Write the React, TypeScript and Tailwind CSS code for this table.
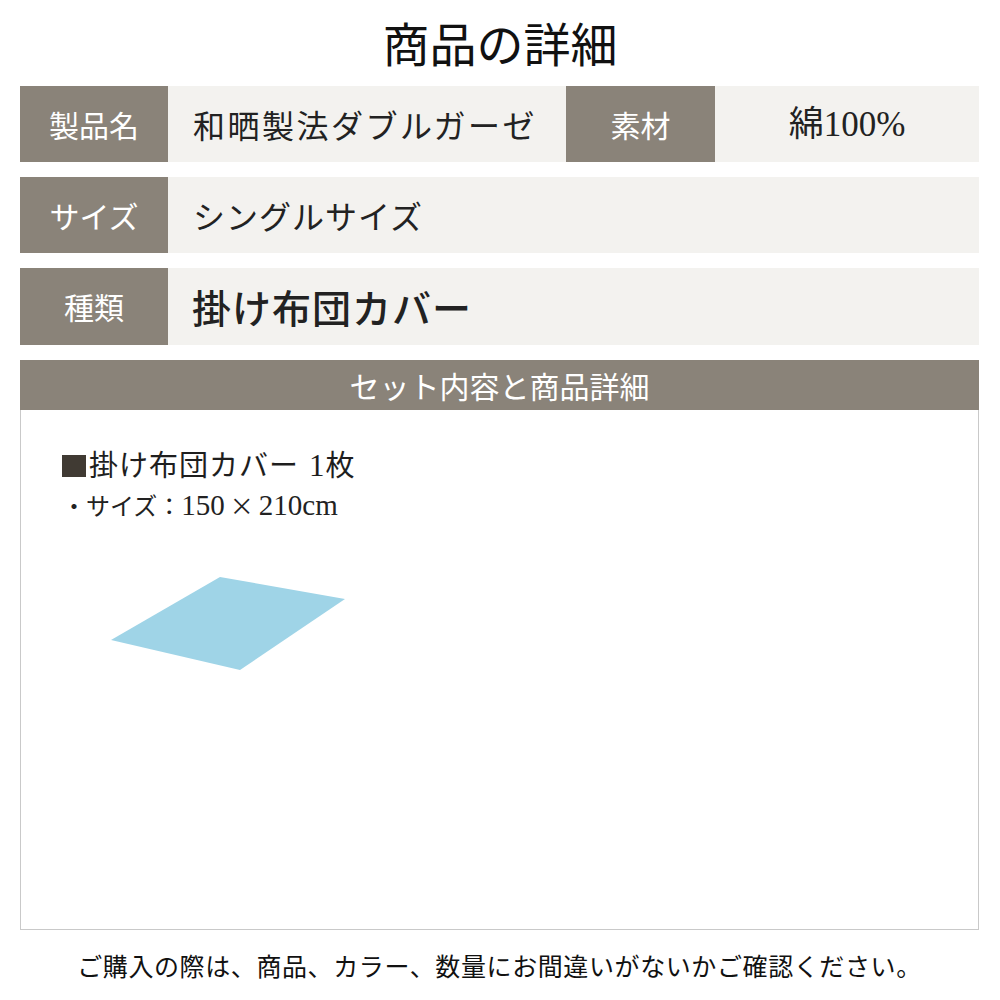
import React from "react";

const font = { fontFamily: '"Noto Sans CJK JP", "Noto Sans", sans-serif' };
const serifDigits = { fontFamily: '"Liberation Serif", "Noto Sans CJK JP", serif' };

function Label({ text, className = "" }: { text: string; className?: string }) {
  return (
    <div
      className={`flex w-[148px] shrink-0 items-center justify-center bg-[#8a8379] text-[30px] text-white ${className}`}
    >
      {text}
    </div>
  );
}

export default function App() {
  return (
    <div className="h-[1000px] w-[1000px] bg-white text-[#222]" style={font}>
      {/* title */}
      <div className="flex h-[86px] items-center justify-center pb-[4px] text-[47px] leading-none text-[#111]">
        商品の詳細
      </div>

      <div className="flex flex-col pl-[20px] pr-[21px]">
        {/* row 1 */}
        <div className="flex h-[76px]">
          <Label text="製品名" />
          <div className="flex w-[398px] items-center bg-[#f3f2ef] pl-[25px] text-[32px] tracking-[2.5px]">
            和晒製法ダブルガーゼ
          </div>
          <Label text="素材" className="w-[149px]" />
          <div
            className="flex flex-1 items-center justify-center bg-[#f3f2ef] pt-[3px] text-[35px]"
            style={serifDigits}
          >
            綿100%
          </div>
        </div>

        {/* row 2 */}
        <div className="mt-[15px] flex h-[76px]">
          <Label text="サイズ" />
          <div className="flex flex-1 items-center bg-[#f3f2ef] pl-[25px] text-[32px] tracking-[1px]">
            シングルサイズ
          </div>
        </div>

        {/* row 3 */}
        <div className="mt-[15px] flex h-[77px]">
          <Label text="種類" />
          <div className="flex flex-1 items-center bg-[#f3f2ef] pl-[24px] text-[39px] font-medium tracking-[1px]">
            掛け布団カバー
          </div>
        </div>

        {/* set contents */}
        <div className="mt-[15px] flex h-[50px] items-center justify-center bg-[#8a8379] text-[30px] text-white">
          セット内容と商品詳細
        </div>
        <div className="h-[520px] border border-t-0 border-[#c9c9c9] pl-[41px] pt-[38px]">
          <div
            className="flex items-center text-[29px] leading-[36px] tracking-[1px] text-[#1e1e1e]"
            style={serifDigits}
          >
            <span className="mr-[3px] inline-block h-[22px] w-[24px] bg-[#403a33]" />
            <span>掛け布団カバー</span>
            <span className="ml-[10px] text-[31px]">1</span>
            <span>枚</span>
          </div>
          <div className="mt-[6px] flex items-baseline text-[24px] leading-[30px] text-[#222]">
            <span>・サイズ：</span>
            <span className="text-[29px]" style={serifDigits}>150</span>
            <span className="mx-[5px]">×</span>
            <span className="text-[29px]" style={serifDigits}>210cm</span>
          </div>
          <svg width="260" height="120" viewBox="0 0 260 120" className="ml-[45px] mt-[54px] block">
            <polygon points="4,66 113,3 238,25 133,96" fill="#9fd4e7" />
          </svg>
        </div>

        {/* footer */}
        <div className="mt-[20px] text-center text-[25px] leading-[30px] tracking-[0.6px] text-[#111]">
          ご購入の際は、商品、カラー、数量にお間違いがないかご確認ください。
        </div>
      </div>
    </div>
  );
}
